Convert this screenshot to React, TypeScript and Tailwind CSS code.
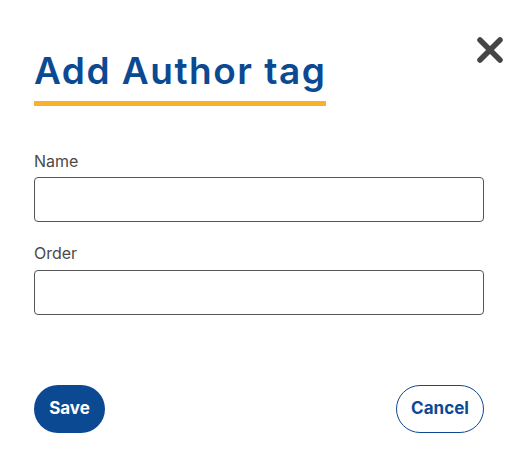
export default function App() {
  return (
    <div className="w-[525px] h-[467px] bg-white relative font-['Inter',sans-serif]">
      <button className="absolute right-[21px] top-[37px] w-[28px] h-[26px] flex items-center justify-center text-[#454545]">
        <svg width="28" height="26" viewBox="0 0 28 26">
          <path d="M4 3 L24 23 M24 3 L4 23" stroke="currentColor" strokeWidth="5.5" strokeLinecap="round" />
        </svg>
      </button>
      <div className="pl-[34px] pr-[41px] pt-[49px]">
        <h2 className="inline-block text-[37px] leading-[44px] font-semibold text-[#0b4a93] tracking-[1.5px] pb-[8px] border-b-[5px] border-[#f8b12b]">
          Add Author tag
        </h2>
        <div className="mt-[45px] flex flex-col">
          <label className="text-[16px] leading-[20px] text-[#4a4a4a]">Name</label>
          <input className="mt-[6px] h-[45px] rounded-[4px] border border-[#555] px-3" />
          <label className="mt-[21px] text-[16px] leading-[20px] text-[#4a4a4a]">Order</label>
          <input className="mt-[7px] h-[45px] rounded-[4px] border border-[#555] px-3" />
        </div>
        <div className="mt-[70px] flex items-center justify-between">
          <button className="h-[48px] w-[71px] rounded-full bg-[#0b4a93] text-white font-bold text-[17px]">
            Save
          </button>
          <button className="h-[48px] w-[88px] rounded-full border border-[#0b4a93] text-[#0b4a93] font-bold text-[17px]">
            Cancel
          </button>
        </div>
      </div>
    </div>
  );
}
